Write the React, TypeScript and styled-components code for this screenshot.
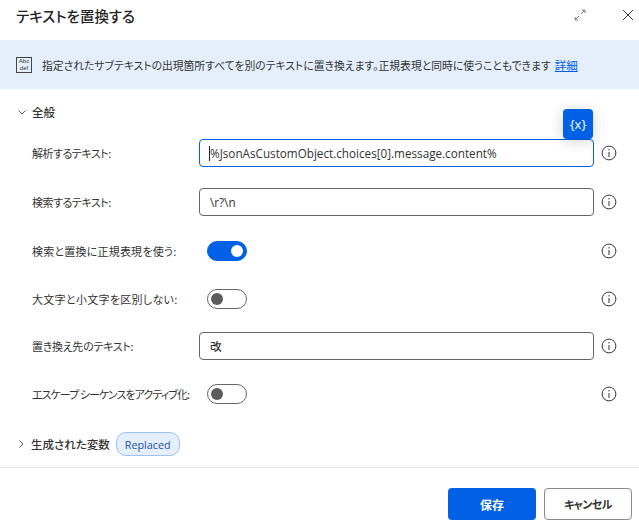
import { FC } from 'react';
import styled, { createGlobalStyle } from 'styled-components';

const GlobalStyle = createGlobalStyle`
  html, body {
    margin: 0;
    padding: 0;
    background: #fff;
    overflow: hidden;
  }
  body {
    font-family: 'Open Sans', 'Noto Sans CJK JP', sans-serif;
    color: #242424;
  }
`;

const jpFont = `'Noto Sans CJK JP', sans-serif`;

const rows = [
  { label: '解析するテキスト:', type: 'input', value: '%JsonAsCustomObject.choices[0].message.content%', focused: true, height: 49, tracking: -0.5 },
  { label: '検索するテキスト:', type: 'input', value: '\\r?\\n', height: 49, tracking: -0.5 },
  { label: '検索と置換に正規表現を使う:', type: 'toggle', on: true, height: 50, tracking: 0.2 },
  { label: '大文字と小文字を区別しない:', type: 'toggle', height: 46, tracking: 0.3 },
  { label: '置き換え先のテキスト:', type: 'input', value: '改', height: 47, tracking: -0.3 },
  { label: 'エスケープ シーケンスをアクティブ化:', type: 'toggle', height: 50, tracking: -0.95 },
];

const InfoIcon: FC = () => (
  <svg width="16" height="16" viewBox="0 0 16 16" fill="none">
    <circle cx="8" cy="8" r="6.9" stroke="#333" strokeWidth="1" />
    <rect x="7.5" y="7" width="1" height="5" fill="#333" />
    <rect x="7.4" y="4.2" width="1.2" height="1.2" fill="#333" />
  </svg>
);

const App: FC = () => (
  <Dialog>
    <GlobalStyle />
    <Header>
      <Title>テキストを置換する</Title>
      <HeaderIcons>
        <svg width="12" height="12" viewBox="0 0 12 12" fill="none" stroke="#777" strokeWidth="1">
          <path d="M7 5 10.5 1.5M8 1.2h3v3M5 7 1.5 10.5M1.2 8v3h3" />
        </svg>
        <svg width="12" height="12" viewBox="0 0 12 12" fill="none" stroke="#333" strokeWidth="1">
          <path d="M1 1 11 11M11 1 1 11" />
        </svg>
      </HeaderIcons>
    </Header>

    <Banner>
      <BannerIcon>
        <span>Abc</span>
        <span>def</span>
      </BannerIcon>
      <BannerText>
        指定されたサブテキストの出現箇所すべてを別のテキストに置き換えます。正規表現と同時に使うこともできます
      </BannerText>
      <BannerLink href="#">詳細</BannerLink>
    </Banner>

    <SectionHeader>
      <svg width="10" height="10" viewBox="0 0 10 10" fill="none" stroke="#555" strokeWidth="1">
        <path d="M1.5 3.5 5 7 8.5 3.5" />
      </svg>
      <SectionTitle>全般</SectionTitle>
    </SectionHeader>

    <Form>
      <VariableButton>{'{x}'}</VariableButton>
      {rows.map((row) => (
        <Row key={row.label} $height={row.height}>
          <Label $tracking={row.tracking}>{row.label}</Label>
          <Control>
            {row.type === 'input' ? (
              <TextBox $focused={row.focused}>
                {row.focused && <Caret />}
                {row.value}
              </TextBox>
            ) : (
              <Toggle $on={row.on}>
                <Knob $on={row.on} />
              </Toggle>
            )}
          </Control>
          <InfoIcon />
        </Row>
      ))}
    </Form>

    <VariablesHeader>
      <svg width="10" height="10" viewBox="0 0 10 10" fill="none" stroke="#555" strokeWidth="1">
        <path d="M3.5 1.5 7 5 3.5 8.5" />
      </svg>
      <SectionTitle>生成された変数</SectionTitle>
      <Tag>Replaced</Tag>
    </VariablesHeader>

    <Footer>
      <PrimaryButton>保存</PrimaryButton>
      <SecondaryButton>キャンセル</SecondaryButton>
    </Footer>
  </Dialog>
);

export default App;

const Dialog = styled.div`
  width: 639px;
  height: 532px;
  display: flex;
  flex-direction: column;
  background: #fff;
`;

const Header = styled.div`
  height: 40px;
  padding: 0 5px 10px 16px;
  box-sizing: border-box;
  display: flex;
  align-items: center;
  justify-content: space-between;
`;

const Title = styled.div`
  font-family: ${jpFont};
  font-feature-settings: 'palt';
  font-size: 14.5px;
  font-weight: 500;
`;

const HeaderIcons = styled.div`
  display: flex;
  align-items: center;
  gap: 36px;
`;

const Banner = styled.div`
  height: 49px;
  padding: 0 16px;
  display: flex;
  align-items: center;
  background: #e5effc;
`;

const BannerIcon = styled.div`
  width: 16px;
  height: 16px;
  flex-shrink: 0;
  margin-right: 10px;
  border: 1px solid #444;
  box-sizing: border-box;
  display: flex;
  flex-direction: column;
  align-items: center;
  justify-content: center;
  font-family: 'Liberation Sans', sans-serif;
  font-size: 6px;
  line-height: 6.5px;
  color: #333;
`;

const BannerText = styled.div`
  font-family: ${jpFont};
  font-feature-settings: 'palt';
  font-size: 10.8px;
  white-space: nowrap;
  color: #333;
`;

const BannerLink = styled.a`
  margin-left: 4px;
  flex-shrink: 0;
  font-family: ${jpFont};
  font-size: 11.5px;
  color: #0060e6;
`;

const SectionHeader = styled.div`
  height: 20px;
  margin-top: 13px;
  padding-left: 17px;
  display: flex;
  align-items: center;
  gap: 5px;
`;

const SectionTitle = styled.div`
  font-family: ${jpFont};
  font-feature-settings: 'palt';
  font-size: 11.5px;
  font-weight: 500;
  color: #333;
`;

const Form = styled.div`
  position: relative;
  margin-top: 6px;
  padding: 0 22px 0 32px;
`;

const Row = styled.div<{ $height: number }>`
  height: ${(p) => p.$height}px;
  display: flex;
  align-items: center;
`;

const Label = styled.div<{ $tracking: number }>`
  width: 167px;
  flex-shrink: 0;
  font-family: ${jpFont};
  font-feature-settings: 'palt';
  font-size: 11px;
  letter-spacing: ${(p) => p.$tracking}px;
  color: #333;
  white-space: pre;
`;

const Control = styled.div`
  width: 395px;
  margin-right: 7px;
  flex-shrink: 0;
`;

const TextBox = styled.div<{ $focused?: boolean }>`
  position: relative;
  height: 28px;
  box-sizing: border-box;
  padding: 0 10px;
  display: flex;
  align-items: center;
  border: 1px solid ${(p) => (p.$focused ? '#0060e6' : '#666')};
  border-radius: 4px;
  font-family: 'Open Sans', ${jpFont};
  font-size: 11.7px;
  font-weight: 500;
  color: #333;
`;

const Caret = styled.span`
  position: absolute;
  left: 9px;
  top: 6px;
  width: 1px;
  height: 15px;
  background: #222;
`;

const Toggle = styled.div<{ $on?: boolean }>`
  width: 40px;
  height: 20px;
  margin-left: 8px;
  box-sizing: border-box;
  display: flex;
  align-items: center;
  justify-content: ${(p) => (p.$on ? 'flex-end' : 'flex-start')};
  padding: 0 3px;
  border-radius: 10px;
  background: ${(p) => (p.$on ? '#0060e6' : '#fff')};
  border: 1px solid ${(p) => (p.$on ? '#0060e6' : '#666')};
`;

const Knob = styled.span<{ $on?: boolean }>`
  width: 12px;
  height: 12px;
  border-radius: 50%;
  background: ${(p) => (p.$on ? '#fff' : '#5c5c5c')};
`;

const VariableButton = styled.button`
  position: absolute;
  top: -19px;
  left: 563px;
  z-index: 1;
  width: 30px;
  height: 30px;
  padding: 0;
  border: none;
  border-radius: 4px;
  background: #0060e6;
  box-shadow: 0 2px 14px rgba(0, 0, 0, 0.18);
  color: #fff;
  font-family: 'Open Sans', sans-serif;
  font-size: 13px;
  font-weight: 500;
`;

const VariablesHeader = styled.div`
  height: 24px;
  margin-top: 13px;
  padding-left: 16px;
  display: flex;
  align-items: center;
  gap: 5px;
`;

const Tag = styled.span`
  height: 24px;
  margin-left: 1px;
  padding: 0 8px;
  box-sizing: border-box;
  display: flex;
  align-items: center;
  border: 1px solid #9cc3f5;
  border-radius: 10px;
  background: #e5effc;
  color: #1c4fa8;
  font-family: 'Open Sans', sans-serif;
  font-size: 10.8px;
`;

const Footer = styled.div`
  margin-top: 11px;
  padding: 20px 7px 0 0;
  border-top: 1px solid #e8e8e8;
  display: flex;
  justify-content: flex-end;
  gap: 8px;
`;

const PrimaryButton = styled.button`
  width: 88px;
  height: 32px;
  border: none;
  border-radius: 4px;
  background: #0060e6;
  color: #fff;
  font-family: ${jpFont};
  font-feature-settings: 'palt';
  font-size: 12px;
  font-weight: 700;
`;

const SecondaryButton = styled.button`
  width: 88px;
  height: 32px;
  border: 1px solid #8a8a8a;
  border-radius: 4px;
  background: #fff;
  color: #333;
  font-family: ${jpFont};
  font-feature-settings: 'palt';
  font-size: 11px;
  font-weight: 700;
  letter-spacing: -0.6px;
`;
